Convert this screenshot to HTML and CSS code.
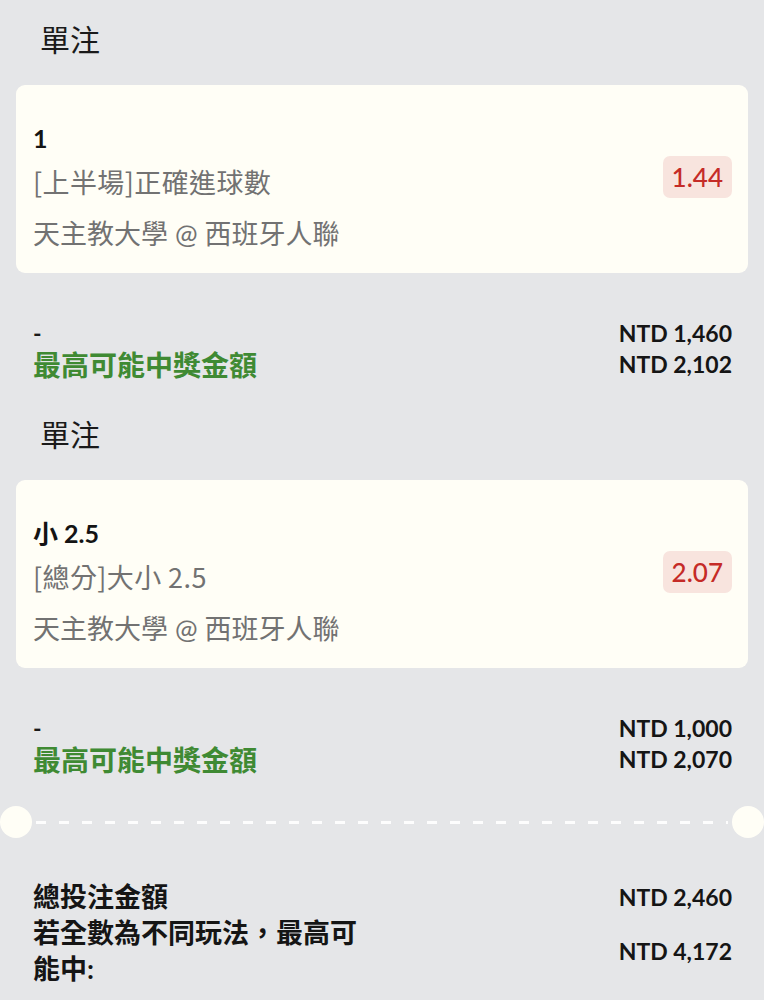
FILE: index.html
```html
<!DOCTYPE html>
<html lang="zh-Hant">
<head>
<meta charset="utf-8">
<title>單注</title>
<link rel="stylesheet" href="styles.css">
</head>
<body>
<div class="page">
  <section class="bet">
    <div class="bet-title">單注</div>
    <div class="card">
      <div class="card-info">
        <div class="pick">1</div>
        <div class="market">[上半場]正確進球數</div>
        <div class="match">天主教大學 @ 西班牙人聯</div>
      </div>
      <div class="odds">1.44</div>
    </div>
    <div class="summary">
      <div class="summary-left">
        <div class="dash">-</div>
        <div class="win-label">最高可能中獎金額</div>
      </div>
      <div class="summary-right">
        <div class="amount">NTD 1,460</div>
        <div class="amount">NTD 2,102</div>
      </div>
    </div>
  </section>

  <section class="bet">
    <div class="bet-title">單注</div>
    <div class="card">
      <div class="card-info">
        <div class="pick">小 2.5</div>
        <div class="market">[總分]大小 2.5</div>
        <div class="match">天主教大學 @ 西班牙人聯</div>
      </div>
      <div class="odds">2.07</div>
    </div>
    <div class="summary">
      <div class="summary-left">
        <div class="dash">-</div>
        <div class="win-label">最高可能中獎金額</div>
      </div>
      <div class="summary-right">
        <div class="amount">NTD 1,000</div>
        <div class="amount">NTD 2,070</div>
      </div>
    </div>
  </section>

  <div class="divider">
    <span class="notch"></span>
    <span class="dashes"></span>
    <span class="notch"></span>
  </div>

  <div class="totals">
    <div class="total-row">
      <div class="total-label">總投注金額</div>
      <div class="amount">NTD 2,460</div>
    </div>
    <div class="total-row">
      <div class="total-label">若全數為不同玩法，最高可能中:</div>
      <div class="amount">NTD 4,172</div>
    </div>
  </div>
</div>
</body>
</html>
```

FILE: styles.css
```css
* {
  box-sizing: border-box;
}

html, body {
  margin: 0;
  padding: 0;
  background: #e5e6e8;
}

body {
  font-family: Lato, "Noto Sans CJK TC", sans-serif;
  color: #1b1b1b;
}

.page {
  display: flex;
  flex-direction: column;
}

.bet {
  display: flex;
  flex-direction: column;
}

.bet-title {
  height: 85px;
  display: flex;
  align-items: center;
  padding: 0 0 10px 40px;
  font-family: "Noto Sans CJK TC", sans-serif;
  font-size: 30px;
  font-weight: 400;
  color: #1a1a1a;
}

.card {
  margin: 0 16px;
  height: 188px;
  background: #fffef6;
  border-radius: 9px;
  padding: 31px 16px 0 17px;
  display: flex;
  align-items: flex-start;
  justify-content: space-between;
}

.card-info {
  display: flex;
  flex-direction: column;
}

.pick {
  font-size: 25px;
  font-weight: 700;
  line-height: 44px;
  color: #141414;
}

.market,
.match {
  font-size: 27px;
  line-height: 44px;
  color: #727272;
}

.market {
  font-family: "Noto Sans CJK TC", sans-serif;
  letter-spacing: 0.4px;
}

.match {
  margin-top: 10px;
  line-height: 40px;
}

.odds {
  margin-top: 40px;
  height: 42px;
  line-height: 42px;
  padding: 0 9px;
  border-radius: 7px;
  background: #f8e4de;
  color: #c52b27;
  font-size: 26px;
  font-weight: 500;
}

.summary {
  display: flex;
  justify-content: space-between;
  padding: 45px 32px 13px 33px;
}

.summary-left,
.summary-right {
  display: flex;
  flex-direction: column;
}

.summary-right {
  align-items: flex-end;
}

.dash {
  font-size: 23px;
  font-weight: 700;
  line-height: 31px;
  color: #1a1a1a;
}

.win-label {
  font-size: 28px;
  font-weight: 700;
  line-height: 33px;
  color: #3f8a33;
}

.amount {
  font-size: 23px;
  font-weight: 700;
  line-height: 31px;
  color: #151515;
  white-space: nowrap;
}

.divider {
  margin-top: 16px;
  height: 32px;
  display: flex;
  align-items: center;
}

.notch {
  width: 32px;
  height: 32px;
  border-radius: 50%;
  background: #fffef6;
  flex: none;
}

.dashes {
  flex: 1;
  height: 3px;
  margin: 0 4px;
  background: repeating-linear-gradient(to right, #fdfdfd 0 10px, transparent 10px 23px);
}

.totals {
  padding: 41px 32px 0 33px;
  display: flex;
  flex-direction: column;
}

.total-row {
  display: flex;
  justify-content: space-between;
  align-items: center;
}

.total-label {
  width: 340px;
  font-size: 27px;
  font-weight: 700;
  line-height: 36px;
  color: #151515;
}
```
